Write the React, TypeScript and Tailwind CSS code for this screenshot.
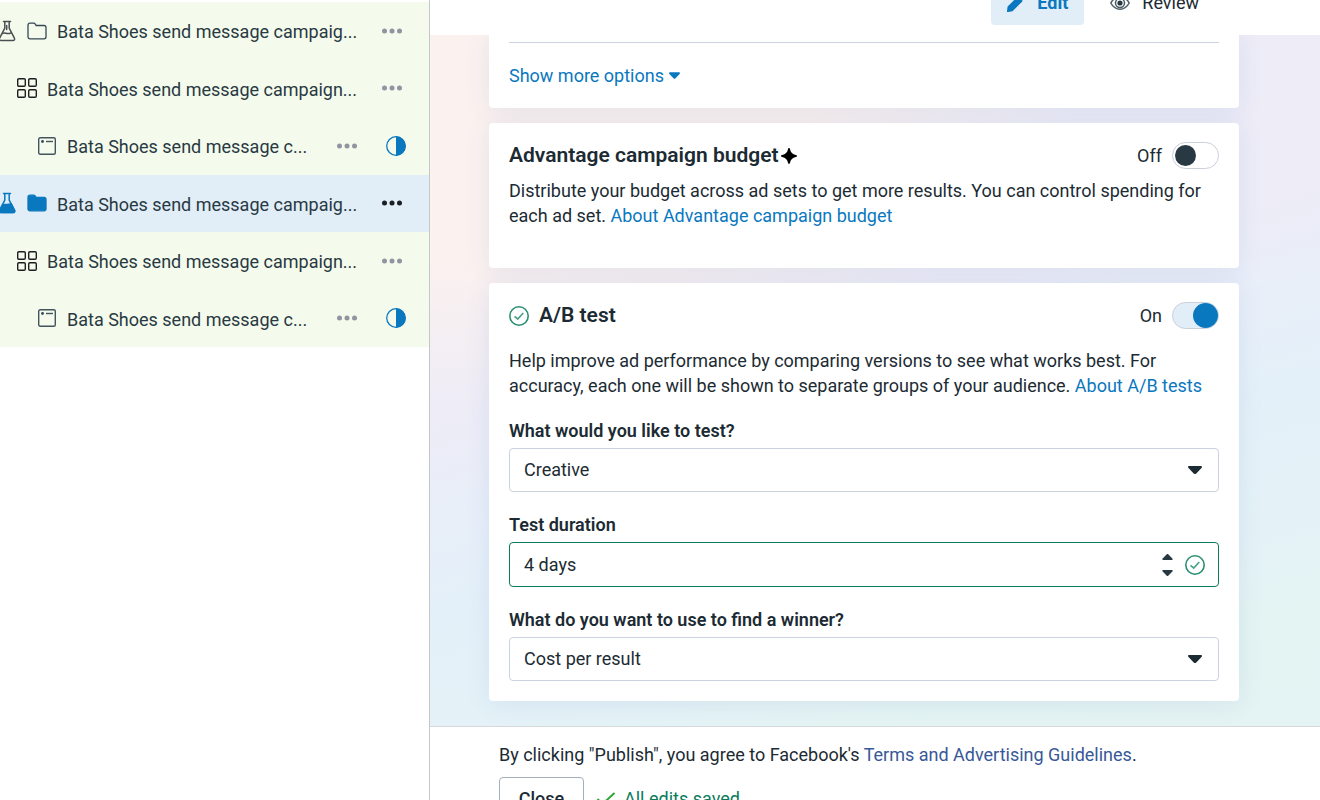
import { useState } from "react";
import type { ReactNode } from "react";

type RowKind = "campaign" | "adset" | "ad";

const rows: { kind: RowKind; label: string; selected?: boolean }[] = [
  { kind: "campaign", label: "Bata Shoes send message campaig..." },
  { kind: "adset", label: "Bata Shoes send message campaign..." },
  { kind: "ad", label: "Bata Shoes send message c..." },
  { kind: "campaign", label: "Bata Shoes send message campaig...", selected: true },
  { kind: "adset", label: "Bata Shoes send message campaign..." },
  { kind: "ad", label: "Bata Shoes send message c..." },
];

function FlaskIcon({ filled }: { filled?: boolean }) {
  const color = filled ? "#0a78be" : "#4b4f52";
  return (
    <svg width="18" height="22" viewBox="0 0 18 22" fill="none" stroke={color} strokeWidth="1.500" strokeLinejoin="round" strokeLinecap="round" className="-ml-0.5 shrink-0">
      <path d="M5.500 1.500h7M6.800 1.700v6.500L1.600 18.200c-.6 1.300.1 2.300 1.400 2.300h12c1.300 0 2-1 1.400-2.300L11.200 8.200V1.700" />
      {filled ? (
        <path d="M4.500 13c2-1.500 4 .5 8.800-1.200l3.600 7.200-.9 1.500H2.500l-.9-1.500z" fill={color} />
      ) : (
        <path d="M4.500 13.500c2.500-2 4.500 1.800 8.500-.7M8.700 5.500v4" />
      )}
    </svg>
  );
}

function FolderIcon({ filled }: { filled?: boolean }) {
  return (
    <svg width="20" height="20" viewBox="0 0 20 20" className="shrink-0">
      <path
        d="M1 4.200C1 3 1.800 2.200 3 2.200h3.600c.8 0 1.300.3 1.700 1l.8 1.300H17c1.200 0 2 .8 2 2v9.300c0 1.200-.8 2-2 2H3c-1.200 0-2-.8-2-2z"
        fill={filled ? "#0a78be" : "none"}
        stroke={filled ? "#0a78be" : "#344854"}
        strokeWidth="1.300"
      />
    </svg>
  );
}

function GridIcon() {
  return (
    <svg width="20" height="20" viewBox="0 0 20 20" fill="none" stroke="#1c1e21" strokeWidth="1.400" className="shrink-0">
      <rect x=".7" y=".7" width="7.600" height="7.600" rx="1.200" />
      <rect x="11.700" y=".7" width="7.600" height="7.600" rx="1.200" />
      <rect x=".7" y="11.700" width="7.600" height="7.600" rx="1.200" />
      <rect x="11.700" y="11.700" width="7.600" height="7.600" rx="1.200" />
    </svg>
  );
}

function AdIcon() {
  return (
    <svg width="18" height="18" viewBox="0 0 18 18" fill="none" stroke="#44545e" strokeWidth="1.400" className="shrink-0">
      <rect x=".7" y=".7" width="16.600" height="16.600" rx="1.500" />
      <path d="M8 4.500h7" />
      <circle cx="4.500" cy="4.500" r="1.400" fill="#344854" stroke="none" />
    </svg>
  );
}

function HalfCircleIcon() {
  return (
    <svg width="20" height="20" viewBox="0 0 20 20" className="shrink-0">
      <circle cx="10" cy="10" r="9.300" fill="none" stroke="#0a78be" strokeWidth="1.300" />
      <path d="M10 .3a9.700 9.700 0 0 1 0 19.400z" fill="#0a78be" />
    </svg>
  );
}

function CheckCircle() {
  return (
    <svg width="20" height="20" viewBox="0 0 20 20" fill="none" stroke="#2a9072" className="shrink-0">
      <circle cx="10" cy="10" r="9.200" strokeWidth="1.600" />
      <path d="M5.500 10.400l3.200 2.600 5.600-6" strokeWidth="1.700" stroke="#4da389" />
    </svg>
  );
}

function Caret({ up, className }: { up?: boolean; className: string }) {
  return (
    <svg viewBox="0 0 14 8" fill="currentColor" className={className}>
      <path d={up ? "M1.200 8h11.600c1.200 0 1.500-1.200.7-2L8.300.6a1.800 1.800 0 0 0-2.600 0L.5 6C-.3 6.800 0 8 1.200 8z" : "M1.200 0h11.600c1.200 0 1.500 1.200.7 2L8.300 7.400a1.800 1.800 0 0 1-2.600 0L.5 2C-.3 1.200 0 0 1.200 0z"} />
    </svg>
  );
}

function MoreButton({ dark }: { dark?: boolean }) {
  return (
    <button type="button" aria-label="More actions" className={dark ? "text-[#1c1e21]" : "text-[#9095a1]"}>
      <svg width="20" height="6" viewBox="0 0 20 6" fill="currentColor" className="block">
        <circle cx="2.500" cy="3" r="2.500" />
        <circle cx="10" cy="3" r="2.500" />
        <circle cx="17.500" cy="3" r="2.500" />
      </svg>
    </button>
  );
}

function Toggle({ label, initial }: { label: string; initial: boolean }) {
  const [on, setOn] = useState(initial);
  return (
    <label className="flex items-center gap-2.5 text-lg leading-[25px]">
      {on ? "On" : "Off"}
      <input
        type="checkbox"
        role="switch"
        aria-label={label}
        checked={on}
        onChange={(e) => setOn(e.target.checked)}
        className="flex h-[27px] w-[47px] appearance-none items-center rounded-full border border-[#c9d0da] bg-white px-0.5 before:block before:size-[21px] before:rounded-full before:bg-[#283943] before:content-[''] checked:justify-end checked:bg-[#e1edf7] checked:px-0 checked:before:size-[25px] checked:before:bg-[#0a78be]"
      />
    </label>
  );
}

function SelectField({ id, label, options }: { id: string; label: string; options: string[] }) {
  return (
    <div>
      <label htmlFor={id} className="block text-lg leading-[25px] font-semibold">{label}</label>
      <div className="mt-[5px] grid h-11 items-center">
        <select id={id} className="col-start-1 row-start-1 h-full w-full appearance-none rounded border border-[#cbd2e0] bg-white pr-12 pl-[14px] text-lg">
          {options.map((o) => (
            <option key={o}>{o}</option>
          ))}
        </select>
        <Caret className="pointer-events-none col-start-1 row-start-1 mr-[17px] h-2 w-[14px] justify-self-end" />
      </div>
    </div>
  );
}

function Card({ children, className }: { children: ReactNode; className: string }) {
  return (
    <section className={`rounded bg-white px-5 shadow-[0_2px_24px_rgba(80,120,190,0.12)] ${className}`}>{children}</section>
  );
}

function Sidebar() {
  return (
    <nav className="w-[430px] shrink-0 border-r border-[#c4c7cb] bg-white pt-0.5">
      <ul className="grid h-[345px] auto-rows-fr bg-[#f5fbec]">
        {rows.map((row, i) => (
          <li key={i} className={`flex items-center ${row.selected ? "bg-[#e1edf7]" : ""}`}>
            {row.kind === "campaign" && (
              <span className="flex w-[57px] items-center gap-[11px]">
                <FlaskIcon filled={row.selected} />
                <FolderIcon filled={row.selected} />
              </span>
            )}
            {row.kind === "adset" && (
              <span className="flex w-[47px] pl-[17px]"><GridIcon /></span>
            )}
            {row.kind === "ad" && (
              <span className="flex w-[67px] pl-[38px]"><AdIcon /></span>
            )}
            <a href="#item" className="flex-1 truncate pt-0.5 text-lg leading-[25px] text-[#283943]">{row.label}</a>
            <span className={`flex items-center ${row.kind === "ad" ? "gap-[29px] pr-[23px]" : "pr-[27px]"}`}>
              <MoreButton dark={row.selected} />
              {row.kind === "ad" && <HalfCircleIcon />}
            </span>
          </li>
        ))}
      </ul>
    </nav>
  );
}

function Header() {
  return (
    <header className="flex h-[35px] shrink-0 items-end justify-end gap-2.5 overflow-hidden bg-white pr-[105px] pb-2.5">
      <button type="button" className="flex h-11 shrink-0 items-center gap-3 rounded bg-[#e1edf7] px-4 text-lg font-bold text-[#0a78be]">
        <svg width="18" height="18" viewBox="0 0 18 18" fill="currentColor">
          <path d="M0 17l.6-4.500L11 2.200 15.800 7 5.500 17.300 1 18c-.7.100-1.100-.3-1-1zM12.200 1l1-.8c.6-.4 1.200-.2 1.700.2l2.500 2.500c.5.500.6 1.200.1 1.700l-.8.9z" />
        </svg>
        Edit
      </button>
      <button type="button" className="flex h-11 shrink-0 items-center gap-3 px-4 text-lg">
        <svg width="20" height="14" viewBox="0 0 20 14" fill="none" stroke="#4b5a63" strokeWidth="1.500">
          <path d="M.8 7C3 3 6 .8 10 .8S17 3 19.200 7C17 11 14 13.200 10 13.200S3 11 .8 7z" />
          <circle cx="10" cy="7" r="4.500" />
          <circle cx="10" cy="7" r="2.600" fill="#283943" stroke="none" />
        </svg>
        Review
      </button>
    </header>
  );
}

export default function App() {
  const [duration, setDuration] = useState(4);
  return (
    <div className="flex h-screen overflow-hidden bg-white font-['Roboto','Noto_Sans',sans-serif] text-[#1c2b33]">
      <Sidebar />
      <div className="flex min-w-0 flex-1 flex-col">
        <Header />
        <main className="flex min-h-0 flex-1 flex-col gap-[15px] overflow-hidden bg-[radial-gradient(ellipse_75%_55%_at_0%_0%,#fbf1ef_60%,rgba(251,241,239,0)_100%),linear-gradient(165deg,#edecf7_0%,#edecf7_42%,#e8eff9_53%,#e4f0f9_62%,#e4f2f7_77%,#e4f4f3_87%,#e4f3f3_100%)] pr-[81px] pl-[59px]">
          <Card className="rounded-t-none pt-[7px] pb-5">
            <hr className="border-[#cbd2e0]" />
            <a href="#options" className="mt-5 flex items-center gap-[5px] text-lg leading-[25px] text-[#0a78be]">
              Show more options
              <Caret className="h-[7px] w-[11px]" />
            </a>
          </Card>

          <Card className="pt-[19px] pb-10">
            <div className="flex items-center justify-between">
              <h2 className="flex items-center gap-0.5 text-[21px] leading-[27px] font-semibold">
                Advantage campaign budget
                <svg width="16" height="16" viewBox="0 0 16 16" fill="#000">
                  <path d="M8 0c.6 0 .8.500 1 1.200C9.700 4.500 11.500 6.300 14.800 7c.7.200 1.200.4 1.200 1s-.5.800-1.200 1C11.500 9.700 9.700 11.500 9 14.800c-.2.700-.4 1.200-1 1.200s-.8-.5-1-1.200C6.300 11.500 4.500 9.700 1.200 9 .5 8.800 0 8.600 0 8s.5-.8 1.200-1C4.500 6.300 6.300 4.500 7 1.200 7.200.5 7.400 0 8 0z" />
                </svg>
              </h2>
              <Toggle label="Advantage campaign budget" initial={false} />
            </div>
            <p className="mt-[9px] text-lg leading-[25px]">
              Distribute your budget across ad sets to get more results. You can control spending for each ad set.{" "}
              <a href="#budget" className="text-[#0a78be]">About Advantage campaign budget</a>
            </p>
          </Card>

          <Card className="pt-[19px] pb-5">
            <div className="flex items-center justify-between">
              <h2 className="flex items-center gap-2.5 text-[21px] leading-[27px] font-semibold">
                <CheckCircle />
                A/B test
              </h2>
              <Toggle label="A/B test" initial />
            </div>
            <p className="mt-[19px] text-lg leading-[25px]">
              Help improve ad performance by comparing versions to see what works best. For accuracy, each one will be shown to separate groups of your audience.{" "}
              <a href="#abtests" className="text-[#0a78be]">About A/B tests</a>
            </p>
            <div className="mt-5 flex flex-col gap-5">
              <SelectField id="variable" label="What would you like to test?" options={["Creative", "Audience", "Placement"]} />
              <div>
                <label htmlFor="duration" className="block text-lg leading-[25px] font-semibold">Test duration</label>
                <div className="mt-[5px] flex h-[45px] items-center rounded border border-[#0a7c5c] pr-[13px] pl-[14px]">
                  <input id="duration" value={`${duration} days`} readOnly className="min-w-0 flex-1 bg-transparent text-lg outline-none" />
                  <span className="mr-3 flex flex-col gap-2.5 text-[#283943]">
                    <button type="button" aria-label="Increase" onClick={() => setDuration(duration + 1)}>
                      <Caret up className="block h-[6px] w-[11px]" />
                    </button>
                    <button type="button" aria-label="Decrease" onClick={() => setDuration(Math.max(1, duration - 1))}>
                      <Caret className="block h-[6px] w-[11px]" />
                    </button>
                  </span>
                  <CheckCircle />
                </div>
              </div>
              <SelectField id="winner" label="What do you want to use to find a winner?" options={["Cost per result", "Cost per click"]} />
            </div>
          </Card>
        </main>
        <footer className="h-[74px] shrink-0 overflow-hidden border-t border-[#d5d8dc] bg-white pt-[15px] pl-[69px]">
          <p className="text-lg leading-[25px]">
            By clicking "Publish", you agree to Facebook's{" "}
            <a href="#terms" className="text-[#385898]">Terms and Advertising Guidelines</a>.
          </p>
          <div className="mt-2.5 flex items-center">
            <button type="button" className="h-11 w-[85px] rounded border border-[#a5aebb] text-lg font-medium">Close</button>
            <span className="ml-3 flex items-center gap-2 text-lg text-[#0a7c5c]">
              <svg width="20" height="14" viewBox="0 0 20 14" fill="none" stroke="#31a535" strokeWidth="2">
                <path d="M1.500 7l5 5L18.500 1" />
              </svg>
              All edits saved
            </span>
          </div>
        </footer>
      </div>
    </div>
  );
}
